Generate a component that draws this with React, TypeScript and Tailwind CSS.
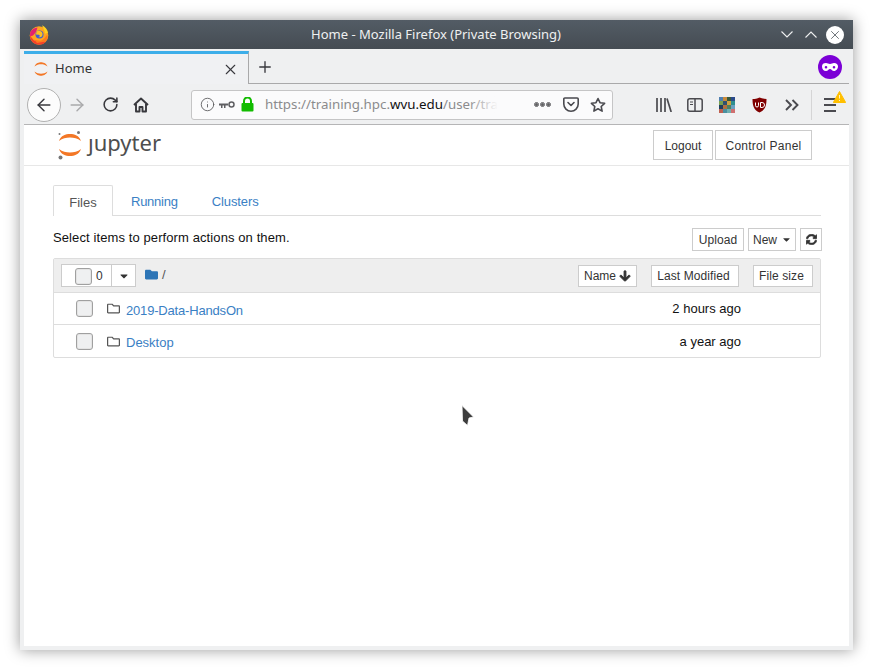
import { ArrowLeft, ArrowRight, RotateCw, X, Plus, Info } from "lucide-react";
import { FaArrowDown, FaFolder, FaRegFolder, FaSyncAlt, FaCaretDown } from "react-icons/fa";

const chrome = "[font-family:'Noto_Sans',sans-serif]";

const JupyterMark = ({ small }: { small?: boolean }) =>
  small ? (
    <svg width="16" height="16" viewBox="0 0 16 16" className="shrink-0">
      <path d="M1.500 5.500C3 2 6 1.300 8 1.300s5 .7 6.500 4.200C12.500 3.900 10.400 3.300 8 3.300S3.500 3.900 1.500 5.500Z" fill="#f37726" />
      <path d="M1.500 10.500C3 14 6 14.700 8 14.700s5-.7 6.500-4.200C12.500 12.100 10.400 12.700 8 12.700s-4.500-.6-6.500-2.200Z" fill="#f37726" />
    </svg>
  ) : (
    <svg width="26" height="30" viewBox="0 0 26 30" className="shrink-0">
      <path d="M2 11C4 5.500 8.500 4 13 4S22 5.500 24 11C20.500 8.300 17 7.500 13 7.500S5.500 8.300 2 11Z" fill="#f37726" />
      <path d="M2 19C4 24.500 8.500 26 13 26S22 24.500 24 19C20.500 21.700 17 22.500 13 22.500S5.500 21.700 2 19Z" fill="#f37726" />
      <circle cx="21.500" cy="2.500" r="1.500" fill="#767677" />
      <circle cx="2.500" cy="4" r="1" fill="#767677" />
      <circle cx="3.500" cy="27.500" r="2" fill="#767677" />
    </svg>
  );

const Firefox = () => (
  <svg width="20" height="20" viewBox="0 0 20 20">
    <circle cx="10" cy="10.500" r="9.300" fill="#ffa51f" />
    <path d="M.8 10.500a9.300 9.300 0 0 0 9.200 9.300c3 0 5.500-1.300 7-3.300L5 15.500Z" fill="#f4402a" />
    <path d="M1.200 7.500c1.500-3 4-4.500 7.300-5L7 7l-3 3.500-3 1Z" fill="#e3226f" />
    <circle cx="10.500" cy="9.500" r="4" fill="#3f5fd4" />
    <path d="M7.500 6.500c2.500-1.500 5.500-.5 6 2s-1.500 4.500-4 3.500c1.500-.3 1.800-1.800.3-2.300L7 9.500Z" fill="#ffc01f" />
    <path d="M13 .3c3 1.500 5.500 4 6 7.500l-3 1c-.5-3-1.500-5.500-3-8.500Z" fill="#ffd21f" />
    <path d="M5 14.500c3 2 8 2 10.500-1.500l3-3.500c.5 3-.5 5.500-2 7L8 18Z" fill="#ff7a1f" />
  </svg>
);

const Home = () => (
  <svg width="16" height="16" viewBox="0 0 16 16" fill="none" stroke="#38383d" strokeWidth="1.900" strokeLinejoin="round">
    <path d="M1 8 8 1.500 15 8" />
    <path d="M3 7v7.500h3.500V10h3v4.500H13V7" />
  </svg>
);

const Key = () => (
  <svg width="16" height="10" viewBox="0 0 16 10" fill="#5f5f62">
    <path d="M0 3.500h9v2H6.500v2.500H5V5.500H3.500V8H2V5.500H0Z" />
    <circle cx="12.500" cy="4.500" r="2.500" fill="none" stroke="#5f5f62" strokeWidth="1.500" />
  </svg>
);

const Lock = () => (
  <svg width="13" height="15" viewBox="0 0 13 15">
    <path d="M3 6V4a3.500 3.500 0 0 1 7 0v2" fill="none" stroke="#12bc00" strokeWidth="2" />
    <rect x="0.500" y="6" width="12" height="8.500" rx="1" fill="#12bc00" />
  </svg>
);

const Pocket = () => (
  <svg width="16" height="15" viewBox="0 0 16 15" fill="none" stroke="#4a4a4f" strokeWidth="1.600" strokeLinejoin="round" strokeLinecap="round">
    <path d="M1.800 1h12.400a1 1 0 0 1 1 1v5a7.200 7.200 0 0 1-14.400 0V2a1 1 0 0 1 1-1Z" />
    <path d="m5 5.500 3 3 3-3" />
  </svg>
);

const Star = () => (
  <svg width="16" height="16" viewBox="0 0 16 16" fill="none" stroke="#4a4a4f" strokeWidth="1.600" strokeLinejoin="round">
    <path d="m8 1.500 2 4.200 4.600.6-3.400 3.200.9 4.600L8 11.800l-4.100 2.300.9-4.600L1.400 6.300 6 5.700Z" />
  </svg>
);

const Library = () => (
  <svg width="16" height="14" viewBox="0 0 16 14" fill="none" stroke="#4a4a4f" strokeWidth="1.700">
    <path d="M1 0v14M5 0v14M9 0v14M11 .5 15.200 14" />
  </svg>
);

const Sidebar = () => (
  <svg width="16" height="14" viewBox="0 0 16 14" fill="none" stroke="#4a4a4f" strokeWidth="1.500">
    <rect x="0.800" y="0.800" width="14.400" height="12.400" rx="2" />
    <path d="M8 1v12" />
    <path d="M3 4h3M3 6.500h3" strokeWidth="1.200" />
  </svg>
);

const mosaic = ["#4f7fb0", "#c98a3a", "#3a5a3a", "#2a4a8a", "#78a050", "#305070", "#d0a040", "#2f8f8f", "#1f3f5f", "#b07040", "#508060", "#6aa0c0", "#c06050", "#4a90a0", "#70b0b0", "#d07070"];

const Mosaic = () => (
  <div className="grid h-4 w-4 grid-cols-4 grid-rows-4">
    {mosaic.map((c, i) => (
      <div key={i} style={{ backgroundColor: c }} />
    ))}
  </div>
);

const UBlock = () => (
  <svg width="15" height="16" viewBox="0 0 15 16">
    <path d="M.5 2C3 2 5 1.500 7.500.5 10 1.500 12 2 14.500 2c0 6-1 11-7 13.500C1.500 13 .5 8 .5 2Z" fill="#800000" />
    <path d="M3.500 5.500v3a1.500 1.500 0 0 0 3 0v-3M8.500 5.500h1.500a2 2 0 0 1 0 5H8.500Z" fill="none" stroke="#fff" strokeWidth="1" />
  </svg>
);

const Chevrons = () => (
  <svg width="14" height="12" viewBox="0 0 14 12" fill="none" stroke="#4a4a4f" strokeWidth="1.900">
    <path d="m1 1 5 5-5 5M7.500 1l5 5-5 5" />
  </svg>
);

const PrivateMask = () => (
  <div className="flex h-6 w-6 items-center justify-center rounded-full bg-[#7b00d6]">
    <svg width="16" height="8" viewBox="0 0 16 8" fill="#fff">
      <path fillRule="evenodd" d="M4 0c1.500 0 2.500 1 4 1s2.500-1 4-1c2.500 0 4 1.500 4 3.500S14.500 8 12 8C10 8 9.500 6 8 6S6 8 4 8C1.500 8 0 6 0 3.500S1.500 0 4 0Zm0 3a1.300 1.300 0 1 0 0 2.600A1.300 1.300 0 0 0 4 3Zm8 0a1.300 1.300 0 1 0 0 2.600A1.300 1.300 0 0 0 12 3Z" />
    </svg>
  </div>
);

const Menu = () => (
  <div className="relative h-4 w-4">
    <div className="flex h-full flex-col justify-between py-[1px] pr-[4px]">
      <div className="h-[2px] bg-[#4a4a4f]" />
      <div className="h-[2px] bg-[#4a4a4f]" />
      <div className="h-[2px] bg-[#4a4a4f]" />
    </div>
    <svg width="13" height="12" viewBox="0 0 13 12" className="absolute -right-[6px] -top-[6px]">
      <path d="M6.500.5 12.700 11.500H.3Z" fill="#ffbf00" stroke="#ffbf00" strokeLinejoin="round" />
      <path d="M6.500 4v3.500M6.500 9v1" stroke="#fff3c4" strokeWidth="1" />
    </svg>
  </div>
);

const Btn = ({ children, className = "" }: { children: React.ReactNode; className?: string }) => (
  <div className={`flex items-center justify-center border border-[#ccc] bg-white text-xs text-[#333] ${className}`}>{children}</div>
);

const Checkbox = ({ className = "" }: { className?: string }) => (
  <div className={`h-[17px] w-[17px] rounded-[3px] border border-[#a0a0a0] bg-[#eff0f1] shadow-[inset_0_0_0_1px_#e4e4e4] ${className}`} />
);

const Row = ({ name, time, last, tight }: { name: string; time: string; last?: boolean; tight?: boolean }) => (
  <div className={`flex h-[32px] items-center pl-[22px] pr-[79px] ${last ? "" : "border-b border-[#ddd]"}`}>
    <Checkbox />
    <FaRegFolder className="ml-[14px] text-[13px] text-[#555]" />
    <span className={`ml-[6px] text-[13px] text-[#3a80c4] ${tight ? "mt-[4px] tracking-[-0.18px]" : "mt-[3px]"}`}>{name}</span>
    <span className={`ml-auto text-[13px] text-[#111] ${last ? "mt-[1px]" : ""}`}>{time}</span>
  </div>
);

export default function App() {
  return (
    <div className="relative h-[670px] w-[873px] overflow-hidden bg-white pl-5 pt-5 [font-family:'Liberation_Sans',sans-serif]">
      <div className="flex h-[630px] w-[833px] flex-col bg-[#eff0f1] shadow-[0_0_14px_rgba(0,0,0,0.4)]">
        {/* title bar */}
        <div className={`flex h-[29px] shrink-0 items-center bg-gradient-to-b from-[#535c65] to-[#454c53] pl-[9px] pr-[9px] text-[13px] text-[#eff0f1] ${chrome}`}>
          <Firefox />
          <span className="flex-1 pl-[42px] text-center">Home - Mozilla Firefox (Private Browsing)</span>
          <svg width="12" height="7" viewBox="0 0 12 7" fill="none" stroke="#eff0f1" strokeWidth="1.100" className="mr-[12px]">
            <path d="m.5.5 5.500 5.500L11.500.5" />
          </svg>
          <svg width="12" height="7" viewBox="0 0 12 7" fill="none" stroke="#eff0f1" strokeWidth="1.100" className="mr-[9px]">
            <path d="m.5 6.500L6 1l5.500 5.500" />
          </svg>
          <div className="flex h-[18px] w-[18px] items-center justify-center rounded-full bg-white">
            <X size={14} strokeWidth={1.300} color="#454c53" />
          </div>
        </div>

        {/* tab strip */}
        <div className="flex h-[35px] shrink-0 items-stretch px-[4px] pt-[2px]">
          <div className={`flex w-[225px] items-center border-r border-[#a9a9aa] border-t-[3px] border-t-[#3daee9] bg-[#f0f1f3] pl-[9px] pr-[9px] text-[13px] text-[#333] ${chrome}`}>
            <JupyterMark small />
            <span className="ml-[6px] flex-1">Home</span>
            <X size={17} strokeWidth={1.500} color="#38383d" />
          </div>
          <div className="flex flex-1 items-center border-b border-[#a9a9aa] pl-[7px] pr-[7px]">
            <Plus size={18} strokeWidth={1.800} color="#38383d" />
            <div className="ml-auto">
              <PrivateMask />
            </div>
          </div>
        </div>

        {/* toolbar */}
        <div className="mx-[4px] flex h-[41px] shrink-0 items-center border-b border-[#b5b5b6] pl-[3px] pt-[1px]">
          <div className="flex h-[34px] w-[34px] items-center justify-center rounded-full border border-[#b1b1b1] bg-[#fcfcfc]">
            <ArrowLeft size={20} strokeWidth={1.700} color="#38383d" />
          </div>
          <ArrowRight size={20} strokeWidth={1.700} color="#a9a9ab" className="ml-[6px]" />
          <RotateCw size={17} strokeWidth={2.200} color="#38383d" className="ml-[15px]" />
          <div className="ml-[14px]">
            <Home />
          </div>
          <div className={`ml-[42px] flex h-[30px] w-[422px] items-center rounded-[3px] border border-[#c5c5c6] bg-[#fbfbfc] pl-[8px] pr-[6px] text-[13.33px] ${chrome}`}>
            <Info size={15} strokeWidth={1.400} color="#5a5a5d" />
            <div className="ml-[4px]">
              <Key />
            </div>
            <div className="ml-[6px]">
              <Lock />
            </div>
            <div className="relative ml-[11px] w-[233px] overflow-hidden whitespace-nowrap text-[#8b8b8d]">
              https://training.hpc.<span className="text-[#111]">wvu.edu</span>/user/tra
              <div className="absolute inset-y-0 right-0 w-[30px] bg-gradient-to-r from-transparent to-[#fbfbfc]" />
            </div>
            <div className="ml-[37px] flex gap-[3px]">
              <div className="h-[3px] w-[3px] rounded-full bg-[#5f5f62] outline outline-[0.5px] outline-[#5f5f62]" />
              <div className="h-[3px] w-[3px] rounded-full bg-[#5f5f62] outline outline-[0.5px] outline-[#5f5f62]" />
              <div className="h-[3px] w-[3px] rounded-full bg-[#5f5f62] outline outline-[0.5px] outline-[#5f5f62]" />
            </div>
            <div className="ml-[13px]">
              <Pocket />
            </div>
            <div className="ml-[11px]">
              <Star />
            </div>
          </div>
          <div className="ml-[43px]">
            <Library />
          </div>
          <div className="ml-[15px]">
            <Sidebar />
          </div>
          <div className="ml-[16px]">
            <Mosaic />
          </div>
          <div className="ml-[17px]">
            <UBlock />
          </div>
          <div className="ml-[18px]">
            <Chevrons />
          </div>
          <div className="ml-[12px] h-[30px] w-px bg-[#d5d5d6]" />
          <div className="ml-[12px]">
            <Menu />
          </div>
        </div>

        {/* page */}
        <div className="mx-[4px] mb-[4px] flex-1 bg-white">
          <div className="flex h-[41px] items-start border-b border-[#e7e7e7] pl-[33px] pr-[37px] pt-[5px]">
            <JupyterMark />
            <div className="relative ml-[5px] mt-[-4px] text-[22px] leading-[32px] text-[#4e4e4e] [font-family:'Noto_Sans',sans-serif]">
              jupyter
              {/* the logo's j has no dot */}
              <div className="absolute left-0 top-[7px] h-[5px] w-[7px] bg-white" />
            </div>
            <Btn className="ml-auto h-[30px] w-[60px] pt-[1px]">Logout</Btn>
            <Btn className="ml-[2px] h-[30px] w-[97px] pt-[1px] tracking-[0.25px]">Control Panel</Btn>
          </div>

          <div className="ml-[29px] w-[768px] pt-[19px]">
            <div className="flex h-[31px] items-stretch border-b border-[#ddd] text-[13px]">
              <div className="flex h-[31px] w-[60px] items-center justify-center rounded-t-[2px] border border-b-0 border-[#ddd] bg-white pt-[4px] text-[#555]">Files</div>
              <div className="ml-[18px] flex items-center pt-[4px] tracking-[-0.25px] text-[#3a80c4]">Running</div>
              <div className="ml-[34px] flex items-center pt-[4px] tracking-[-0.1px] text-[#3a80c4]">Clusters</div>
            </div>

            <div className="flex h-[42px] items-start pt-[12px] text-[13px] text-[#111]">
              <span className="tracking-[0.1px]">Select items to perform actions on them.</span>
              <Btn className="ml-auto h-[23px] w-[52px] tracking-[0.1px]">Upload</Btn>
              <Btn className="ml-[4px] h-[23px] w-[48px] gap-[4px] pl-[1px]">
                New <FaCaretDown className="text-[11px]" />
              </Btn>
              <Btn className="-mr-px ml-[4px] h-[23px] w-[22px]">
                <FaSyncAlt className="text-[11px]" stroke="currentColor" strokeWidth={30} />
              </Btn>
            </div>

            <div className="rounded-[2px] border border-[#ddd]">
              <div className="flex h-[34px] items-center border-b border-[#ddd] bg-[#eee] px-[7px]">
                <div className="flex h-[23px] w-[50px] items-center border border-r-0 border-[#ccc] bg-white pl-[13px] pt-[1px] text-xs text-[#333]">
                  <Checkbox />
                  <span className="ml-[4px]">0</span>
                </div>
                <Btn className="h-[23px] w-[25px]">
                  <FaCaretDown className="text-[12px]" />
                </Btn>
                <FaFolder className="ml-[9px] mt-[-2px] text-[13px] text-[#2d75b6]" />
                <span className="ml-[4px] mt-[-2px] text-[13px] text-[#555]">/</span>
                <Btn className="ml-auto h-[22px] w-[59px] gap-[3px] pt-[1px]">
                  Name <FaArrowDown className="text-[12px]" stroke="currentColor" strokeWidth={40} />
                </Btn>
                <Btn className="ml-[14px] h-[22px] w-[88px] pr-[3px] pt-[1px] tracking-[0.08px]">Last Modified</Btn>
                <Btn className="ml-[14px] h-[22px] w-[60px] pr-[3px] pt-[1px] tracking-[0.1px]">File size</Btn>
              </div>
              <Row name="2019-Data-HandsOn" time="2 hours ago" tight />
              <Row name="Desktop" time="a year ago" last />
            </div>
          </div>
        </div>
      </div>

      {/* mouse pointer */}
      <svg width="14" height="22" viewBox="0 0 14 22" className="absolute left-[461px] top-[405px]">
        <path d="M1 .5 12.500 12 8 13l-1.500 7.500L1.500 16Z" fill="#3d3d3d" stroke="#fff" strokeWidth="0.800" />
      </svg>
    </div>
  );
}
